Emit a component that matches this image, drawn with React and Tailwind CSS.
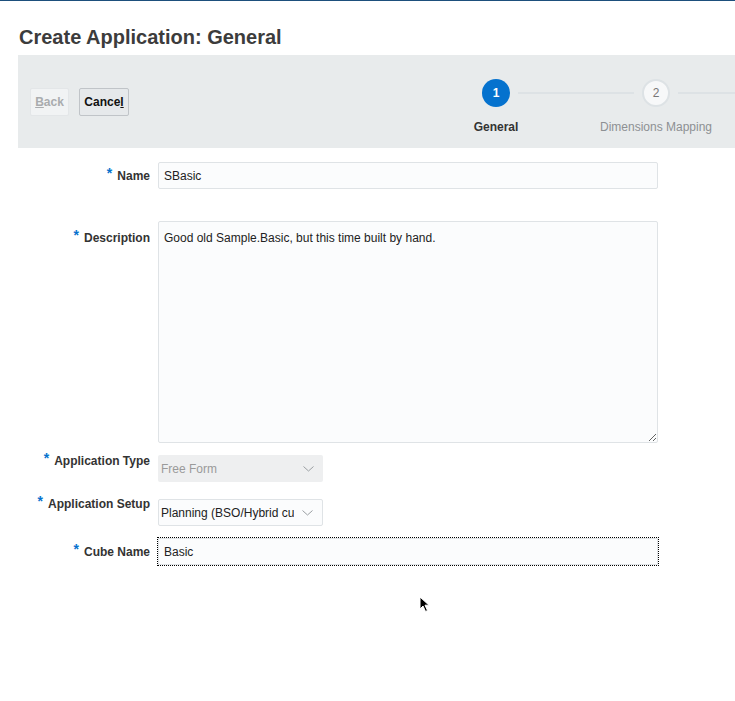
import React from "react";

function Chevron() {
  return (
    <svg width="11" height="6" viewBox="0 0 11 6" className="shrink-0">
      <path d="M0.5 0.5 L5.5 5 L10.5 0.5" fill="none" stroke="#9a9ea2" strokeWidth="1" />
    </svg>
  );
}

function Label({ children, className = "" }) {
  return (
    <div className={"w-[150px] shrink-0 text-right text-[12px] leading-[14px] font-bold text-[#333] " + className}>
      <span className="text-[#0572ce] text-[14px] relative -top-[2px] mr-[5px]">*</span>
      {children}
    </div>
  );
}

function Step({ n, label, active, first }) {
  return (
    <div className="w-[160px] shrink-0 flex flex-col items-center pt-[24px]">
      <div className="w-full flex items-center gap-[8px]">
        <div className={"flex-1 h-[2px] " + (first ? "bg-transparent" : "bg-[#dde2e5]")} />
        {active ? (
          <div className="w-[28px] h-[28px] rounded-full bg-[#0572ce] flex items-center justify-center text-white text-[12px] font-bold">
            {n}
          </div>
        ) : (
          <div className="w-[28px] h-[28px] rounded-full bg-[#f7f8f9] border-2 border-[#dde2e5] flex items-center justify-center text-[#777] text-[12px]">
            {n}
          </div>
        )}
        <div className="flex-1 h-[2px] bg-[#dde2e5]" />
      </div>
      <div className={"mt-[13px] text-[12px] leading-[14px] whitespace-nowrap " + (active ? "font-bold text-[#333]" : "text-[#8d9093]")}>
        {label}
      </div>
    </div>
  );
}

export default function App() {
  return (
    <div className="relative w-[735px] h-[701px] overflow-hidden bg-white border-t border-[#1d4f7c] font-['Liberation_Sans',Arial,sans-serif]">
      <h1 className="pl-[19px] pt-[24px] text-[20px] leading-[24px] font-bold text-[#3c3c3c]">
        Create Application: General
      </h1>

      <div className="ml-[18px] mt-[6px] h-[93px] bg-[#e8ebec] flex overflow-hidden">
        <div className="flex items-center gap-[10px] pl-[12px] shrink-0">
          <div className="h-[28px] w-[39px] flex items-center justify-center bg-[#f1f3f4] border border-[#e3e6e8] rounded-[2px] text-[12px] font-bold text-[#a9acae]">
            <span><span className="underline">B</span>ack</span>
          </div>
          <div className="h-[28px] w-[50px] flex items-center justify-center bg-[#e6e9eb] border border-[#c0c4c8] rounded-[2px] text-[12px] font-bold text-[#111]">
            <span>Cance<span className="underline">l</span></span>
          </div>
        </div>
        <div className="flex ml-[287px] shrink-0">
          <Step n="1" label="General" active first />
          <Step n="2" label="Dimensions Mapping" />
        </div>
      </div>

      <div className="mt-[14px] flex flex-col">
        <div className="flex items-center gap-[8px]">
          <Label>Name</Label>
          <div className="w-[500px] h-[27px] flex items-center pl-[5px] bg-[#fbfcfd] border border-[#dfe3e6] rounded-[2px] text-[12px] text-[#222]">
            SBasic
          </div>
        </div>

        <div className="flex items-start gap-[8px] mt-[32px]">
          <Label className="pt-[9px]">Description</Label>
          <textarea
            readOnly
            defaultValue="Good old Sample.Basic, but this time built by hand."
            className="w-[500px] h-[222px] block pt-[8px] px-[5px] bg-[#fbfcfd] border border-[#dfe3e6] rounded-[2px] text-[12px] leading-[16px] text-[#222] outline-none resize"
          />
        </div>

        <div className="flex items-start gap-[8px] mt-[12px]">
          <Label className="-mt-[2px]">Application Type</Label>
          <div className="w-[165px] h-[27px] flex items-center justify-between pl-[3px] pr-[9px] bg-[#eeeff0] rounded-[2px] text-[12px] text-[#9a9a9a]">
            <span>Free Form</span>
            <Chevron />
          </div>
        </div>

        <div className="flex items-start gap-[8px] mt-[17px]">
          <Label className="-mt-[3px]">Application Setup</Label>
          <div className="w-[165px] h-[27px] flex items-center pl-[2px] pr-[9px] bg-[#fbfcfd] border border-[#dfe3e6] rounded-[2px] text-[12px] text-[#222]">
            <span className="w-[133px] overflow-hidden whitespace-nowrap">Planning (BSO/Hybrid cube)</span>
            <span className="ml-auto flex"><Chevron /></span>
          </div>
        </div>

        <div className="flex items-center gap-[8px] mt-[12px]">
          <Label>Cube Name</Label>
          <div className="w-[500px] h-[27px] flex items-center pl-[5px] bg-[#fbfcfd] border border-[#dfe3e6] outline-1 outline-dotted outline-black text-[12px] text-[#222]">
            Basic
          </div>
        </div>
      </div>

      <svg className="absolute left-[419px] top-[595px]" width="12" height="17" viewBox="0 0 12 17">
        <path d="M1 1 L1 13 L4 10 L6.5 15.5 L8.5 14.5 L6 9.2 L10 9.2 Z" fill="#000" stroke="#fff" strokeWidth="1" />
      </svg>
    </div>
  );
}
